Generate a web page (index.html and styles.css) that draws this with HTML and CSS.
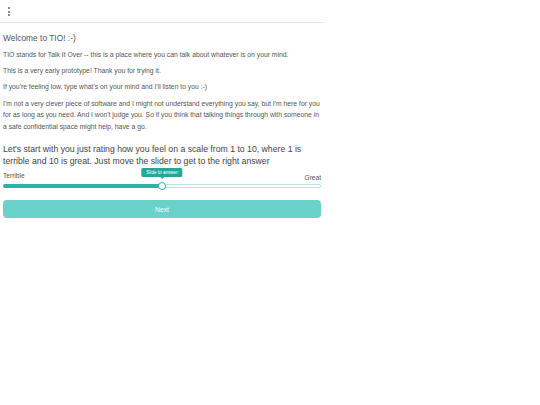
FILE: index.html
```html
<!DOCTYPE html>
<html>
<head>
<meta charset="utf-8">
<link rel="stylesheet" href="styles.css">
</head>
<body>
<div class="app">
  <header class="topbar">
    <span class="kebab"><i></i><i></i><i></i></span>
  </header>
  <main class="content">
    <h1 class="title">Welcome to TIO! :-)</h1>
    <p class="text">TIO stands for Talk It Over -- this is a place where you can talk about whatever is on your mind.</p>
    <p class="text">This is a very early prototype! Thank you for trying it.</p>
    <p class="text">If you're feeling low, type what's on your mind and I'll listen to you :-)</p>
    <p class="text">I'm not a very clever piece of software and I might not understand everything you say, but I'm here for you for as long as you need. And I won't judge you. So if you think that talking things through with someone in a safe confidential space might help, have a go.</p>
    <p class="question">Let's start with you just rating how you feel on a scale from 1 to 10, where 1 is terrible and 10 is great. Just move the slider to get to the right answer</p>
    <div class="scale">
      <div class="labels">
        <span class="lab-left">Terrible</span>
        <span class="lab-right">Great</span>
      </div>
      <div class="slider">
        <div class="fill" style="width: 50%"></div>
        <div class="thumb" style="left: 50%">
          <div class="tip">Slide to answer</div>
        </div>
      </div>
    </div>
    <button class="next">Next</button>
  </main>
</div>
</body>
</html>
```
FILE: styles.css
```css
html, body {
  margin: 0;
  padding: 0;
  background: #fff;
}
body {
  font-family: "Liberation Sans", Arial, Helvetica, sans-serif;
  color: #555;
}
.app {
  width: 324px;
}
.topbar {
  height: 23px;
  border-bottom: 1px solid #e6e6e6;
  display: flex;
  align-items: center;
  padding-left: 8px;
  box-sizing: border-box;
}
.kebab {
  display: flex;
  flex-direction: column;
  gap: 1.5px;
  margin-top: 1px;
}
.kebab i {
  display: block;
  width: 2px;
  height: 2px;
  background: #666;
  border-radius: 50%;
}
.content {
  padding: 0 3px;
}
.title {
  font-size: 8.4px;
  font-weight: 400;
  color: #555;
  margin: 10px 0 4.5px;
  line-height: 11px;
}
.text {
  font-size: 6.8px;
  line-height: 11.4px;
  margin: 0 0 5px;
  color: #555;
}
.question {
  font-size: 8.7px;
  line-height: 12px;
  color: #444;
  margin: 11px 0 4.5px;
}
.labels {
  display: flex;
  justify-content: space-between;
  font-size: 6.6px;
  color: #555;
  line-height: 9px;
}
.lab-right {
  margin-top: 2px;
}
.slider {
  position: relative;
  height: 4px;
  border: 1px solid #b5e6e1;
  border-radius: 3px;
  box-sizing: border-box;
  background: #fff;
  margin: 1.5px 0 0;
}
.fill {
  position: absolute;
  left: -1px;
  top: -1px;
  bottom: -1px;
  background: #2bb3a7;
  border-radius: 3px 0 0 3px;
}
.thumb {
  position: absolute;
  top: 50%;
  width: 8px;
  height: 8px;
  margin: -4px 0 0 -4px;
  box-sizing: border-box;
  border: 1px solid #2bb3a7;
  border-radius: 50%;
  background: #fff;
}
.tip {
  position: absolute;
  bottom: 12px;
  left: 50%;
  transform: translateX(-50%);
  background: #27a69a;
  color: #fff;
  font-size: 4.6px;
  line-height: 9px;
  padding: 0 5px;
  white-space: nowrap;
  border-radius: 1.5px;
}
.tip::after {
  content: "";
  position: absolute;
  left: 50%;
  top: 100%;
  margin-left: -2px;
  border: 2px solid transparent;
  border-top-color: #27a69a;
}
.next {
  display: block;
  width: 100%;
  height: 18.5px;
  margin-top: 12px;
  border: none;
  border-radius: 4px;
  background: #6bd2ca;
  color: #f4fffd;
  font-family: "Liberation Sans", Arial, sans-serif;
  font-size: 6.8px;
  padding: 0;
}
```
